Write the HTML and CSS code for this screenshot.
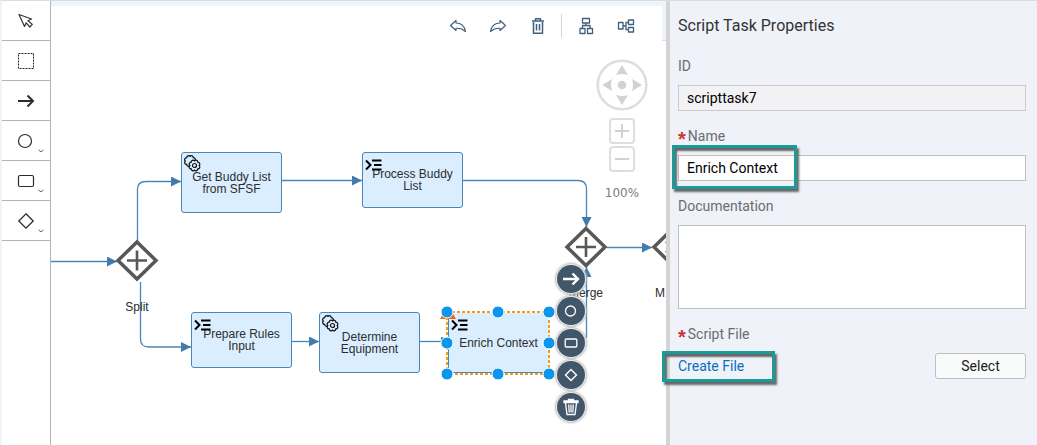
FILE: index.html
```html
<!DOCTYPE html>
<html lang="en">
<head>
<meta charset="utf-8">
<title>Workflow Editor</title>
<link rel="stylesheet" href="styles.css">
</head>
<body>
<svg class="defs" width="0" height="0" aria-hidden="true">
  <defs>
    <marker id="arrow" viewBox="0 0 10 10" refX="10" refY="5" markerWidth="10" markerHeight="10" markerUnits="userSpaceOnUse" orient="auto">
      <path d="M0 0L10 5L0 10Z" fill="#427cac"/>
    </marker>
    <symbol id="i-script" viewBox="0 0 17 12">
      <path d="M1 1.500L5.500 6L1 10.500M7 1.500H16.500M9 6H16.500M7 10.500H16.500" fill="none" stroke="#000" stroke-width="2"/>
    </symbol>
    <path id="cog" d="M10.700 6A1.900 1.900 0 0 1 9.300 9.300A1.900 1.900 0 0 1 6 10.700A1.900 1.900 0 0 1 2.700 9.300A1.900 1.900 0 0 1 1.300 6A1.900 1.900 0 0 1 2.700 2.700A1.900 1.900 0 0 1 6 1.300A1.900 1.900 0 0 1 9.300 2.700A1.900 1.900 0 0 1 10.700 6Z" fill="#daeeff" stroke="#111" stroke-width="1.200"/>
    <symbol id="i-gear" viewBox="0 0 17 17">
      <use href="#cog"/>
      <use href="#cog" x="4.500" y="4.500"/>
      <circle cx="10.500" cy="10.500" r="2" fill="none" stroke="#111" stroke-width="1.200"/>
    </symbol>
    <symbol id="i-arrow" viewBox="0 0 18 18">
      <path d="M1 9H16M10.500 3.500L16 9L10.500 14.500" fill="none" stroke="currentColor" stroke-width="2"/>
    </symbol>
    <symbol id="i-circle" viewBox="0 0 18 18">
      <circle cx="8" cy="9" r="6.500" fill="none" stroke="currentColor" stroke-width="1.200"/>
    </symbol>
    <symbol id="i-rect" viewBox="0 0 18 18">
      <rect x="1.500" y="3.500" width="15" height="11" rx="1.500" fill="none" stroke="currentColor" stroke-width="1.200"/>
    </symbol>
    <symbol id="i-diamond" viewBox="0 0 18 18">
      <path d="M9 1.800L16.200 9L9 16.200L1.800 9Z" fill="none" stroke="currentColor" stroke-width="1.300"/>
    </symbol>
    <symbol id="i-chevron" viewBox="0 0 6 4">
      <path d="M0.500 1L3 2.800L5.500 1" fill="none" stroke="#666" stroke-width="1"/>
    </symbol>
  </defs>
</svg>

<div class="editor">
  <nav class="palette" aria-label="Shapes">
    <button class="tool" aria-label="Pointer"><svg width="18" height="18" viewBox="0 0 18 18"><path d="M2 2.500L14.500 7L11 8.800L15.300 12.400L12.800 15L9.200 10.800L7.500 14.500Z" fill="none" stroke="#333" stroke-width="1.200" stroke-linejoin="round"/></svg></button>
    <button class="tool" aria-label="Lasso"><svg width="18" height="18" viewBox="0 0 18 18"><rect x="1.500" y="1.500" width="15" height="15" fill="none" stroke="#222" stroke-dasharray="2 1"/></svg></button>
    <button class="tool" aria-label="Connect"><svg width="18" height="18"><use href="#i-arrow"/></svg></button>
    <button class="tool" aria-label="Events"><svg width="18" height="18"><use href="#i-circle"/></svg><svg class="more" width="6" height="4"><use href="#i-chevron"/></svg></button>
    <button class="tool" aria-label="Tasks"><svg width="18" height="18"><use href="#i-rect"/></svg><svg class="more" width="6" height="4"><use href="#i-chevron"/></svg></button>
    <button class="tool" aria-label="Gateways"><svg width="18" height="18"><use href="#i-diamond"/></svg><svg class="more" width="6" height="4"><use href="#i-chevron"/></svg></button>
  </nav>

  <main class="canvas">
    <div class="diagram">
      <svg class="wires" width="100%" height="100%">
        <g fill="none" stroke="#4a86b8" stroke-width="1.300">
          <path d="M0 260.500H66" marker-end="url(#arrow)"/>
          <path d="M86.500 240V188Q86.500 180.500 95 180.500H130" marker-end="url(#arrow)"/>
          <path d="M89.500 281V338Q89.500 346 98 346H140" marker-end="url(#arrow)"/>
          <path d="M231 179.500H311" marker-end="url(#arrow)"/>
          <path d="M412 179.500H527Q535.500 179.500 535.500 188V226" marker-end="url(#arrow)"/>
          <path d="M241 340.500H268" marker-end="url(#arrow)"/>
          <path d="M369 340.500H400" marker-end="url(#arrow)"/>
          <path d="M535.500 337V266" marker-end="url(#arrow)"/>
          <path d="M556 246.500H601" marker-end="url(#arrow)"/>
        </g>
        <g fill="#fff" stroke="#585858" stroke-width="3.500">
          <path d="M86 241L105 259.500L86 278L67 259.500Z"/>
          <path d="M535 227.500L554 246L535 264.500L516 246Z"/>
          <path d="M622 227.500L641 246L622 264.500L603 246Z"/>
          <path d="M76 259.500H96M86 249.500V269.500M525 246H545M535 236V256" stroke-width="2.600"/>
          <path d="M614.500 241L628 251M614.500 251L628 241" stroke-width="1.500"/>
        </g>
        <g class="wire-label" text-anchor="middle">
          <text x="86" y="310">Split</text>
          <text x="535" y="296">Merge</text>
          <text x="609" y="296">M</text>
        </g>
      </svg>

      <div class="task tall get-buddy"><svg class="mark" width="17" height="17"><use href="#i-gear"/></svg>Get Buddy List<br>from SFSF</div>
      <div class="task process-buddy"><svg class="mark script" width="17" height="12"><use href="#i-script"/></svg>Process Buddy<br>List</div>
      <div class="task prepare"><svg class="mark script" width="17" height="12"><use href="#i-script"/></svg>Prepare Rules<br>Input</div>
      <div class="task tall determine"><svg class="mark" width="17" height="17"><use href="#i-gear"/></svg>Determine<br>Equipment</div>
      <div class="task tall enrich"><svg class="mark script" width="17" height="12"><use href="#i-script"/></svg>Enrich Context</div>

      <svg class="selection" width="120" height="76" aria-hidden="true">
        <path d="M10 0L18 14H2Z" fill="#f0641e"/>
        <rect x="9" y="7" width="102" height="62" fill="none" stroke="#fff" stroke-width="2"/>
        <rect x="9" y="7" width="102" height="62" fill="none" stroke="#f59a14" stroke-width="2" stroke-dasharray="3 2"/>
        <g fill="#0a96ec" stroke="#fff" stroke-width="1">
          <circle cx="9" cy="7" r="6"/><circle cx="60" cy="7" r="6"/><circle cx="111" cy="7" r="6"/>
          <circle cx="9" cy="38" r="6"/><circle cx="111" cy="38" r="6"/>
          <circle cx="9" cy="69" r="6"/><circle cx="60" cy="69" r="6"/><circle cx="111" cy="69" r="6"/>
        </g>
      </svg>

      <div class="pad">
        <button aria-label="Connect"><svg width="18" height="18" viewBox="0 0 18 18" fill="none" stroke="currentColor" stroke-width="2.400"><path d="M1 9H16M10.500 3.500L16 9L10.500 14.500"/></svg></button>
        <button aria-label="Append event"><svg width="14" height="14" viewBox="0 0 14 14" fill="none" stroke="currentColor" stroke-width="1.300"><circle cx="6.500" cy="7" r="5"/></svg></button>
        <button aria-label="Append task"><svg width="14" height="14" viewBox="0 0 14 14" fill="none" stroke="currentColor" stroke-width="1.300"><rect x="1.200" y="3" width="11.600" height="8" rx="1"/></svg></button>
        <button aria-label="Append gateway"><svg width="14" height="14" viewBox="0 0 14 14" fill="none" stroke="currentColor" stroke-width="1.400"><path d="M7 1.500L12.500 7L7 12.500L1.500 7Z"/></svg></button>
        <button aria-label="Delete"><svg width="16" height="18" viewBox="0 0 16 18" fill="none" stroke="currentColor" stroke-width="1.300"><path d="M1 4.500V3H15V4.500ZM5.500 3V1.500H10.500V3M2.500 5L4 16.500H12L13.500 5"/><path d="M5.700 6.500L6.200 14.500M8 6.500V14.500M10.300 6.500L9.800 14.500"/></svg></button>
      </div>
    </div>

    <header class="toolbar">
      <div class="actions">
        <button aria-label="Undo"><svg width="18" height="18" viewBox="0 0 18 18"><path d="M1.500 8.500L7 3.500V6C12 6 15.500 9 16.500 14.500C13.500 11.800 11 11 7 11.300V13.500Z"/></svg></button>
        <button aria-label="Redo"><svg width="18" height="18" viewBox="0 0 18 18"><path d="M16.500 8.500L11 3.500V6C6 6 2.500 9 1.500 14.500C4.500 11.800 7 11 11 11.300V13.500Z"/></svg></button>
        <button aria-label="Delete"><svg width="18" height="18" viewBox="0 0 18 18"><path d="M4.500 5V16.300H13.500V5M3 4H15M6.500 3.500V1.700H11.500V3.500M7.500 7V13.500M10.500 7V13.500" stroke-width="1.500"/></svg></button>
        <span class="divider"></span>
        <button aria-label="Vertical layout"><svg width="18" height="18" viewBox="0 0 18 18"><path d="M5.500 1.500H12.500V6H5.500ZM3.500 11.500H8V16.500H3V11.500ZM10.500 11.500H15.500V16.500H10.500ZM9 6V8.500M5.500 11.500V8.500H13V11.500" stroke-width="1.300"/></svg></button>
        <button aria-label="Horizontal layout"><svg width="18" height="18" viewBox="0 0 18 18"><path d="M1.500 5.500H6V12H1.500ZM11.500 3H16.500V7.500H11.500ZM11.500 10.500H16.500V15H11.500ZM6 9H9M11.500 5.500H9V12.700H11.500" stroke-width="1.300"/></svg></button>
      </div>
      <span class="corner"></span>
    </header>

    <div class="zoom">
      <svg width="52" height="52" viewBox="0 0 52 52" fill="#d2d2d2">
        <circle cx="26" cy="26" r="24.300" fill="#fff" stroke="#dedede" stroke-width="2.600"/>
        <path d="M26 6L32 16Q26 14 20 16ZM26 46L32 36Q26 38 20 36ZM6 26L16 20Q14 26 16 32ZM46 26L36 20Q38 26 36 32Z"/>
        <circle cx="26" cy="26" r="4.300"/>
      </svg>
      <button aria-label="Zoom in"><svg width="16" height="16"><path d="M1 8H15M8 1V15" stroke="#d2d2d2" stroke-width="2"/></svg></button>
      <button aria-label="Zoom out"><svg width="16" height="16"><path d="M1 8H15" stroke="#d2d2d2" stroke-width="2"/></svg></button>
      <output class="level">100%</output>
    </div>
  </main>

  <aside class="properties">
    <h1>Script Task Properties</h1>
    <div class="field">
      <label for="task-id">ID</label>
      <input id="task-id" value="scripttask7" readonly>
    </div>
    <div class="field">
      <label for="task-name" class="required">Name</label>
      <input id="task-name" value="Enrich Context">
      <span class="callout name-callout"></span>
    </div>
    <div class="field">
      <label for="task-doc">Documentation</label>
      <textarea id="task-doc"></textarea>
    </div>
    <div class="field">
      <label for="select-file" class="required">Script File</label>
      <div class="file-row">
        <a href="#">Create File</a>
        <button id="select-file">Select</button>
      </div>
      <span class="callout file-callout"></span>
    </div>
  </aside>
</div>
</body>
</html>
```
FILE: styles.css
```css
* { box-sizing: border-box; }

body {
  margin: 0;
  font-family: Roboto, "Liberation Sans", sans-serif;
  font-size: 14px;
}

button {
  display: flex;
  align-items: center;
  justify-content: center;
  padding: 0;
  border: 0;
  background: none;
  font: inherit;
  cursor: pointer;
}

.defs { position: absolute; }

.editor {
  display: grid;
  grid-template-columns: 49px minmax(0, 1fr) 371px;
  min-height: 100vh;
  border-top: 1px solid #d9dce0;
  border-left: 2px solid #eff4f9;
}

/* Shape palette */
.palette {
  border-right: 1px solid #b4b4b4;
  background: #fff;
}

.tool {
  position: relative;
  width: 100%;
  height: 40px;
  border-bottom: 1px solid #b4b4b4;
  color: #2c2c2c;
}

.more {
  position: absolute;
  right: 6px;
  bottom: 7px;
}

/* Canvas */
.canvas {
  position: relative;
  overflow: hidden;
  background: #fff;
}

.diagram {
  position: absolute;
  inset: 0;
}

.wires { display: block; }

.wire-label,
.task {
  font-family: "Liberation Sans", Arial, sans-serif;
  font-size: 12px;
  line-height: 12px;
}

.wire-label { fill: #2d2d2d; }

.task {
  position: absolute;
  display: grid;
  place-content: center;
  width: 101px;
  height: 56px;
  border: 1px solid #4a86b8;
  border-radius: 3px;
  background: #daeeff;
  color: #2d2d2d;
  text-align: center;
}

.task.tall { height: 61px; }

.get-buddy { left: 130px; top: 151px; }
.process-buddy { left: 311px; top: 151px; }
.prepare { left: 140px; top: 311px; }
.determine { left: 268px; top: 311px; }
.enrich { left: 397px; top: 311px; }

.mark {
  position: absolute;
  left: 2px;
  top: 2px;
}

.mark.script { top: 6px; }

.selection {
  position: absolute;
  left: 387px;
  top: 304px;
}

.pad {
  position: absolute;
  left: 506px;
  top: 264px;
  display: grid;
  gap: 4px;
}

.pad button {
  width: 28px;
  height: 28px;
  border-radius: 50%;
  background: #42566a;
  box-shadow: 0 0 0 1px #e8ebee, 0 0 2px 2px #bdbdbd;
  color: #fff;
}

.toolbar {
  position: relative;
  display: flex;
  justify-content: flex-end;
  border-top: 5px solid #eff4f9;
}

.actions {
  display: flex;
  align-items: center;
  padding-right: 16px;
}

.actions button {
  width: 40px;
  height: 40px;
}

.actions svg {
  fill: none;
  stroke: #3f5f7c;
  stroke-width: 1.2;
  stroke-linejoin: round;
}

.divider {
  width: 1px;
  height: 24px;
  margin: 0 4px 0 3px;
  background: #d4d4d4;
}

.corner {
  width: 4px;
  height: 35px;
  border-bottom: 1px solid #cfe2f2;
  background: #eff4f9;
}

.zoom {
  position: absolute;
  top: 58px;
  right: 18px;
  display: flex;
  flex-direction: column;
  align-items: center;
  gap: 2px;
}

.zoom > svg { margin-bottom: 5px; }

.zoom button {
  width: 26px;
  height: 26px;
  border: 2px solid #dedede;
  border-radius: 4px;
  background: #fff;
}

.level {
  margin-top: 10px;
  color: #7c7c7c;
  font-family: "DejaVu Sans", sans-serif;
  font-size: 12px;
  line-height: 18px;
}

/* Properties panel */
.properties {
  display: flex;
  flex-direction: column;
  gap: 16px;
  padding: 15px 11px 16px 8px;
  border-left: 4px solid #d4d4d4;
  background: #eff2f8;
}

.properties h1 {
  margin: 0 0 5px;
  color: #333;
  font-size: 16px;
  font-weight: 400;
  line-height: 20px;
}

.field {
  position: relative;
  display: grid;
  gap: 10px;
}

.field label {
  color: #6a6d70;
  line-height: 18px;
}

.required::before {
  content: "*";
  margin-right: 2px;
  color: #c33;
  font-family: "Liberation Sans", Arial, sans-serif;
  font-size: 20px;
  font-weight: 700;
  line-height: 1px;
  vertical-align: -5px;
}

.field input,
.field textarea {
  display: block;
  width: 100%;
  height: 26px;
  margin: 0;
  padding: 0 8px;
  border: 1px solid #bfbfbf;
  border-radius: 0;
  background: #fff;
  color: #000;
  font: inherit;
}

.field input:read-only {
  border-color: #ccc;
  background: #f2f2f4;
}

.field textarea {
  height: 84px;
  resize: none;
}

.file-row {
  display: flex;
  align-items: center;
  justify-content: space-between;
}

.file-row a {
  color: #0a6ebd;
  text-decoration: none;
}

.file-row button {
  width: 91px;
  height: 26px;
  border: 1px solid #bfbfbf;
  border-radius: 3px;
  background: #f9fafa;
  color: #222;
}

.callout {
  position: absolute;
  border: 3px solid #1a9a99;
  box-shadow: 2px 3px 2px #666, inset 2px 3px 2px #666;
  pointer-events: none;
}

.name-callout {
  left: -6px;
  top: 18px;
  width: 125px;
  height: 44px;
}

.file-callout {
  left: -16px;
  top: 26px;
  width: 113px;
  height: 31px;
}
```
